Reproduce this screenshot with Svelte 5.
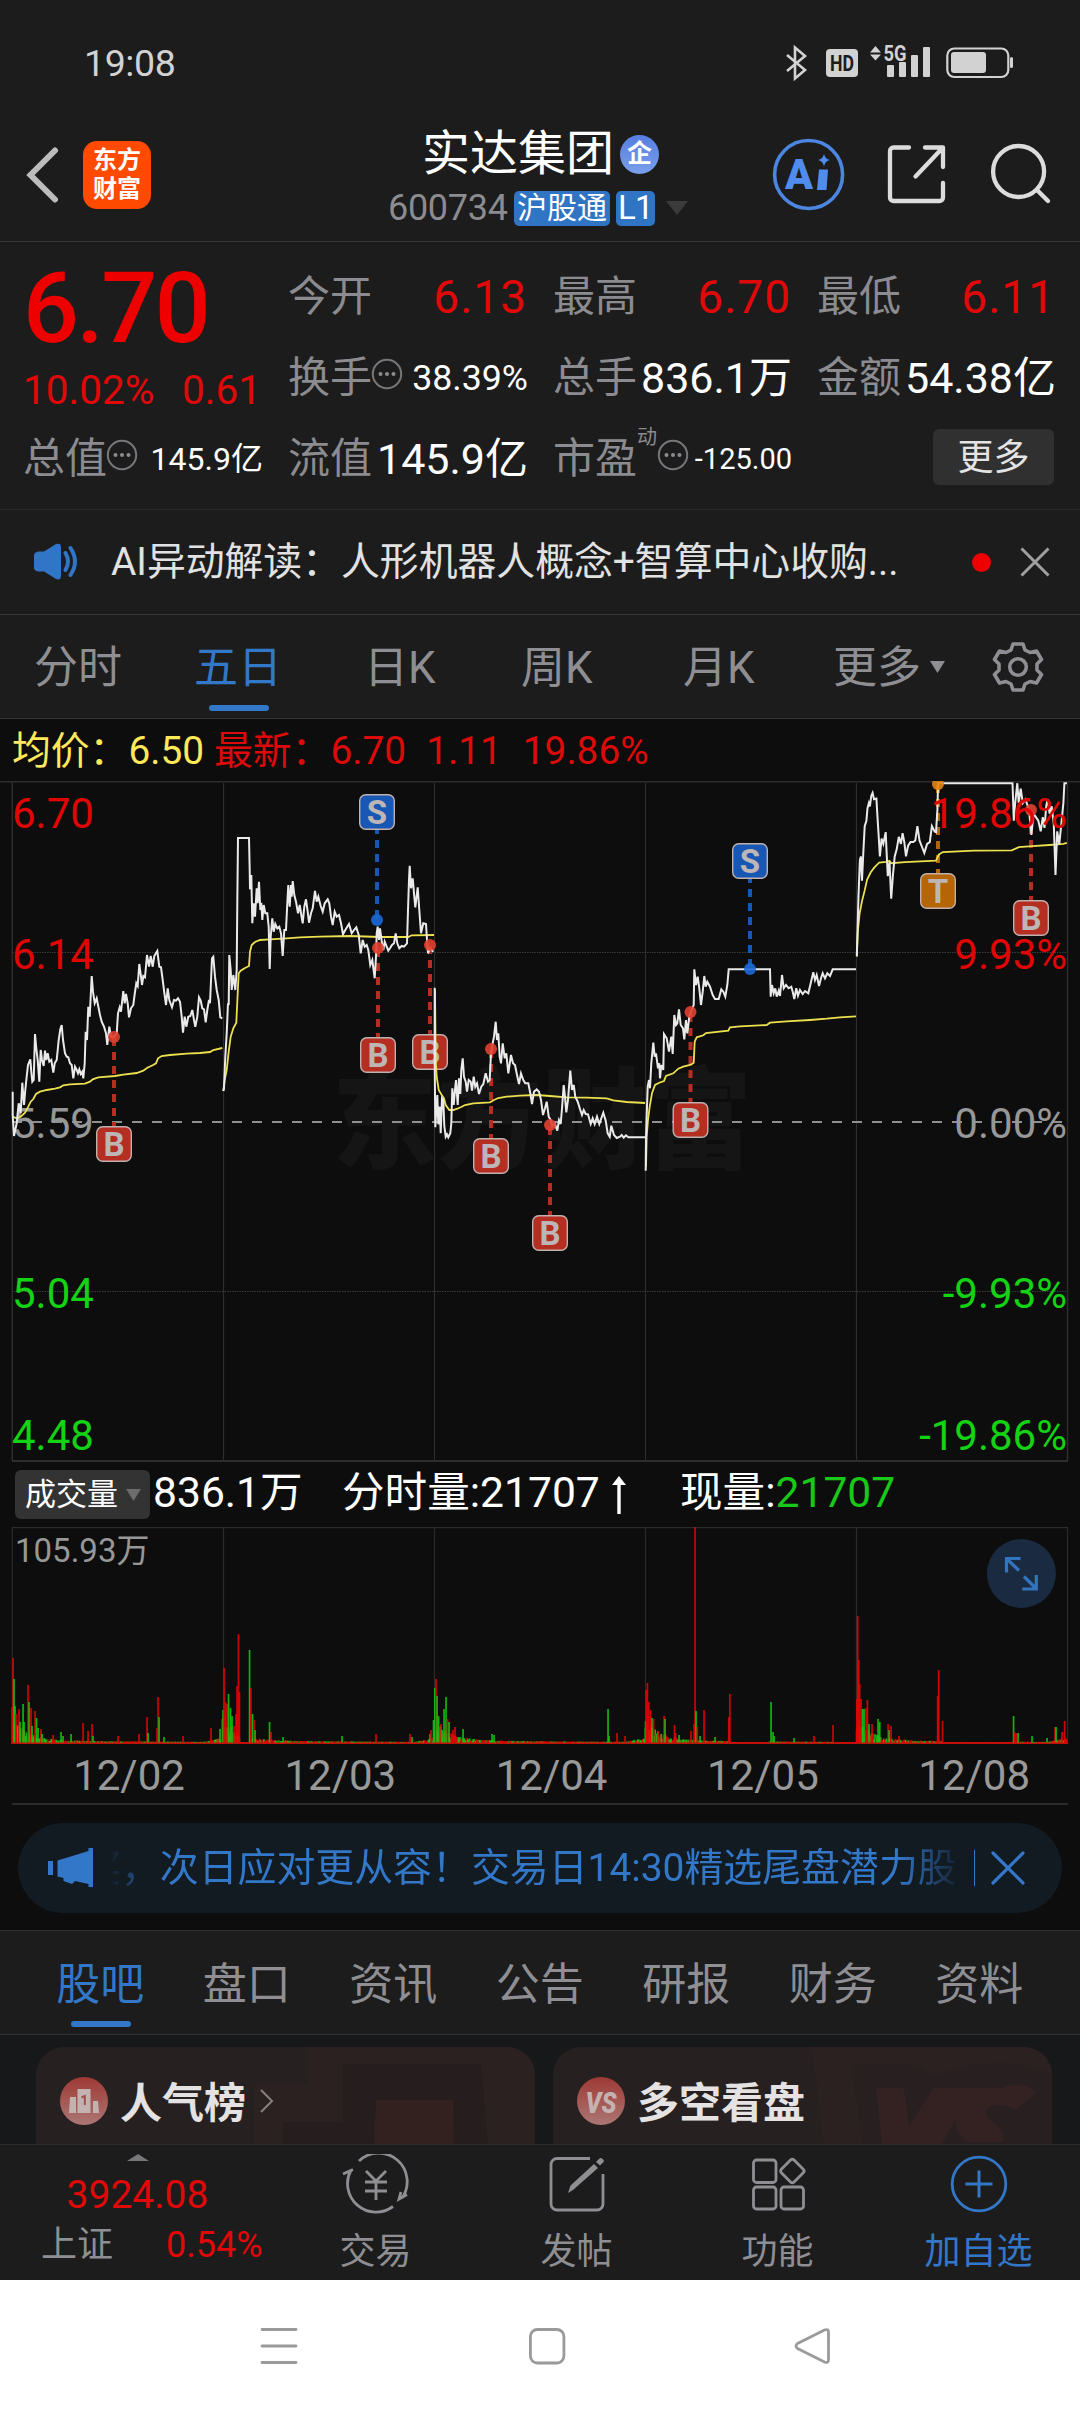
<script>
  // Intraday price sessions: each has an origin, a scale and a "x,y" series.
  const sessions = [
    { o: [0, 770], s: [3, 3],
      price: '38,965 38,1035 42,1098 50,1060 56,1000 62,1030 67,938 72,1005 76,960 80,920 84,885 91,868 94,905 97,935 101,930 105,792 109,835 113,870 118,935 122,840 126,870 131,888 135,842 139,870 143,850 148,875 154,870 160,908 164,880 170,870 176,810 181,778 185,765 189,810 195,850 200,860 205,862 210,880 215,885 220,925 225,890 230,900 234,910 238,898 242,912 247,905 250,925 254,880 257,785 261,810 265,710 269,740 275,618 279,665 284,700 290,685 294,705 300,735 305,755 312,770 318,790 322,825 328,770 333,800 342,800 350,790 354,730 359,712 363,725 370,663 374,700 378,672 383,700 387,742 393,715 400,705 404,672 409,640 413,648 418,582 423,620 426,645 430,618 435,622 441,555 447,590 452,558 458,590 463,558 472,543 478,590 483,592 488,630 493,668 498,705 503,655 508,690 516,712 522,690 528,692 534,685 540,695 545,740 549,788 554,740 559,770 565,740 571,738 577,720 581,745 586,770 592,740 597,682 602,692 607,715 612,718 617,757 622,720 627,690 630,700 636,565 640,560 645,620 650,660 656,690 661,742 667,745',
      avg: '38,1040 50,1045 62,1040 75,1028 85,1010 92,995 100,987 108,972 120,965 140,960 165,956 180,952 190,946 210,943 255,941 270,935 278,928 295,922 345,918 370,914 410,909 430,902 442,893 458,886 468,880 474,865 485,858 510,855 560,851 600,849 630,846 640,840 667,834' },
    { o: [0, 770], s: [3, 3],
      price: '670,963 672,955 676,860 680,790 684,700 686,705 688,555 692,600 695,660 700,615 706,660 710,600 712,400 714,204 747,204 749,300 750,358 754,315 757,460 761,400 765,440 770,355 773,400 777,335 781,420 784,398 787,450 791,405 796,430 802,430 806,470 809,597 812,500 817,445 821,485 826,462 832,475 838,470 843,490 848,558 853,480 858,480 862,400 865,345 869,410 873,345 875,380 878,333 883,375 888,395 894,430 899,405 904,435 908,460 913,410 918,388 923,425 927,458 933,430 938,415 945,363 950,395 955,380 962,408 968,425 974,400 983,388 988,400 993,440 998,465 1004,425 1010,440 1017,435 1023,460 1029,493 1036,480 1047,462 1055,490 1062,480 1069,472 1076,495 1082,550 1088,510 1094,530 1100,525 1105,540 1111,585 1117,570 1124,625 1128,560 1130,490 1133,470 1137,510 1140,475 1146,520 1150,540 1154,515 1160,530 1165,542 1170,535 1176,525 1182,520 1187,490 1192,520 1198,535 1205,528 1212,530 1221,520 1224,420 1227,330 1229,287 1233,355 1238,325 1243,380 1246,412 1253,352 1258,420 1263,490 1270,460 1278,462 1281,510 1284,550 1290,535 1300,545',
      avg: '670,963 674,930 680,900 686,845 692,800 700,775 709,758 714,650 716,610 722,602 735,594 747,588 750,545 755,525 765,516 780,510 810,508 860,505 900,502 960,500 1050,498 1140,501 1225,501 1235,496 1302,495' },
    { o: [320, 920], s: [3, 3],
      price: '344,203 344,430 346,622 349,570 352,525 355,613 359,560 362,640 366,535 370,540 373,618 377,650 381,643 385,652 391,640 394,610 397,505 401,555 405,510 408,480 413,555 417,475 421,522 424,450 428,415 432,470 437,485 441,515 446,480 452,485 456,512 461,470 466,500 471,490 477,522 484,500 490,492 497,460 504,485 509,480 513,400 518,370 522,350 527,305 531,360 535,340 539,410 543,430 548,370 554,415 559,400 565,460 573,405 579,430 585,435 591,465 597,492 603,460 610,480 616,490 625,490 631,520 636,552 642,515 650,508 657,515 663,540 669,585 675,565 680,545 686,590 692,600 697,620 704,610 712,632 717,600 722,612 726,565 731,495 735,530 739,577 744,540 751,452 756,510 761,495 766,530 773,545 781,570 786,585 791,570 797,582 804,583 812,612 818,595 824,612 831,590 838,612 850,578 857,602 863,640 869,650 874,617 882,645 890,654 900,650 905,645 911,653 918,646 925,652 975,652',
      avg: '345,210 347,420 350,470 356,510 365,525 372,535 377,555 388,570 400,570 412,566 425,560 435,555 460,550 510,547 522,540 535,534 560,530 600,527 650,525 690,528 740,532 800,533 860,535 880,541 920,546 975,549' },
    { o: [320, 920], s: [3, 3],
      price: '977,752 978,650 981,560 983,500 987,480 990,505 994,430 1000,368 1004,410 1008,400 1014,445 1018,430 1020,475 1024,435 1030,450 1032,342 1040,355 1047,395 1054,350 1058,402 1063,285 1068,315 1072,310 1077,268 1082,315 1089,325 1093,358 1098,300 1102,340 1108,290 1113,275 1121,255 1123,148 1128,195 1133,170 1138,205 1143,255 1148,215 1153,168 1157,200 1162,185 1170,200 1178,225 1185,237 1196,237 1204,208 1210,215 1216,230 1222,195 1226,148 1350,148 1352,230 1356,195 1361,220 1366,205 1370,230 1376,212 1380,228 1386,165 1391,205 1398,195 1406,205 1414,200 1418,215 1423,237 1429,205 1434,227 1440,210 1448,222 1455,213 1465,220 1472,190 1480,157 1485,180 1490,165 1497,198 1503,175 1508,160 1515,175 1522,160 1530,168 1538,148 1608,148',
      avg: '978,740 980,650 984,600 989,560 996,520 1005,495 1018,488 1032,483 1038,468 1060,460 1075,446 1090,440 1113,434 1121,428 1124,365 1130,352 1150,346 1158,339 1225,332 1230,322 1260,319 1340,315 1350,308 1400,304 1470,300 1520,296 1560,292 1608,289' },
    { o: [540, 610], s: [2.904, 2.8],
      price: '920,970 922,900 925,800 929,700 932,690 935,758 939,680 943,605 948,590 951,555 955,540 958,550 962,520 966,512 970,530 977,528 980,580 983,625 987,690 992,640 997,655 1004,622 1007,690 1010,745 1015,705 1020,808 1025,740 1030,690 1036,670 1042,635 1048,655 1053,625 1058,650 1063,690 1069,660 1076,650 1084,650 1090,645 1096,605 1102,645 1110,665 1116,680 1124,655 1132,650 1138,605 1146,620 1150,622 1154,560 1156,485 1372,485 1376,590 1380,540 1386,485 1390,540 1396,500 1402,540 1410,530 1420,560 1427,630 1433,570 1440,580 1447,590 1454,620 1460,580 1465,610 1470,550 1474,530 1480,570 1486,550 1492,600 1497,742 1502,620 1508,655 1514,600 1520,540 1523,485 1530,485',
      avg: '920,970 923,900 928,850 935,815 943,785 950,755 960,735 970,722 985,707 1005,705 1015,702 1020,709 1060,706 1150,702 1158,685 1170,678 1260,674 1370,673 1390,664 1430,661 1480,658 1520,655 1530,652' }
  ];
  const plot = (str, { o, s }) =>
    str.split(' ').map((p) => {
      const [x, y] = p.split(',').map(Number);
      return `${(o[0] + x / s[0]).toFixed(1)},${(o[1] + y / s[1]).toFixed(1)}`;
    }).join(' ');
  const lines = sessions.map((d) => ({ price: plot(d.price, d), avg: plot(d.avg, d) }));

  // Trade markers: letter, x, price point y, badge centre y
  const marks = [
    ['B', 114, 1037, 1144], ['S', 377, 920, 812], ['B', 378, 948, 1055], ['B', 430, 945, 1052],
    ['B', 491, 1049, 1156], ['B', 550, 1125, 1233], ['B', 690.5, 1012, 1120], ['S', 750, 969, 861],
    ['T', 938, 784, 891], ['B', 1031, 810, 918]
  ];
  const markFill = { B: '#b52e22', S: '#1858b4', T: '#b56505' };
  const dotFill = { B: '#e0402f', S: '#1c68d8', T: '#e08413' };

  const axis = [
    ['6.70', '19.86%', 827.5, 'r'], ['6.14', '9.93%', 969, 'r'], ['5.59', '0.00%', 1138, 'n'],
    ['5.04', '-9.93%', 1308, 'g'], ['4.48', '-19.86%', 1450, 'g']
  ];
  const vlines = [223.5, 434.5, 645.5, 856.5];
  const dates = ['12/02', '12/03', '12/04', '12/05', '12/08'];

  // Volume: spikes per session plus small decaying per-minute bars
  const R = '#e60505', G = '#14c814';
  const spikes = 'r12,37 r13,86 g14,65 g15,38 r16,30 r19,35 g20,22 g23,40 g24,22 r28,59 g29,42 r31,36 g32,18 r35,33 g36.5,26 g38,16 r41,15 g42,10 r53,9 g61,12 g63,8 g71,10 r83,21 r88,13 r92,20 g93,8 r118,8 r139,10 r147,27 g148,11 r157,16 r158,47 g159,27 g164,7 r183,8 r211,16 g220,15 r222,25 g223,34 r224,76 r225.5,42 r227,40 g228.5,50 g230.5,36 g232,28 r234,18 r236,30 r237,58 r238.4,110 r239.4,52 g249.5,94 r250.8,56 g252.5,30 r254,24 g255,14 g269.5,22 r271,12 g283,7 g342,8 r376,10 r410,10 g412,7 g430,10 r431,14 g433.5,24 g434.8,56 r436,65 g437,48 g438.5,28 r441,20 g442,14 g444,35 g446,47 r447.5,25 g449,22 r453,14 r455,17 g463,15 g492,10 g494,9 g608,35 g609,8 r617,11 r625,8 g645.4,16 r646.2,54 r647.4,61 r648.8,42 r650.5,34 g652,26 r653.5,25 r658,13 r664,28 g665,25 r674.5,19 r675.5,11 g679,9 r691,13 r694,20 r695,217 g696,33 r697.2,17 g700,8 r704,34 g715,7 r728.7,27 r729.8,50 g771,42 g773,12 g774,8 g794,6 r814,8 r833,19 r856.8,45 r857.6,128 r858.6,84 r859.6,60 r861,45 g862.5,35 g864,35 r866,36 r867.4,44 g869,20 r872,20 g878,25 g879.7,22 r888,20 g889,14 r891,18 r899,8 r937.6,48 r938.6,74 r942.5,23 g1013.5,28 r1014.5,12 r1016,11 g1018,11 g1032,8 g1047,6 r1055,17 g1056,17 r1062,12 r1064.6,23'
    .split(' ').map((t) => ({ c: t[0] === 'r' ? R : G, x: +t.slice(1).split(',')[0], h: +t.split(',')[1] }));
  let seed = 7;
  const rnd = () => ((seed = (seed * 16807) % 2147483647) / 2147483647);
  const noise = [];
  for (let d = 0; d < 5; d++) {
    for (let i = 0; i < 240; i++) {
      const x = 12.5 + d * 211 + i * 0.879;
      const limit = (x > 731 && x < 769) || (x > 943 && x < 1012) || (x > 834 && x < 856) || (x > 240 && x < 249);
      const env = limit ? 0 : 24 * Math.exp(-i / 14) + 4 * Math.exp(-i / 70) + (i > 218 ? (i - 218) * 0.22 : 0);
      noise.push({ x, h: 2 + env * (0.25 + 0.75 * rnd()), c: limit || rnd() > 0.48 ? R : G });
    }
  }
  const bars = [...noise, ...spikes];

  const tabs = [['分时', 'w1'], ['五日', 'w2 on'], ['日K', 'w3'], ['周K', 'w4'], ['月K', 'w5']];
  const sections = ['股吧', '盘口', '资讯', '公告', '研报', '财务', '资料'];
</script>

{#snippet dots()}
  <svg class="dots" viewBox="0 0 32 32"><circle cx="16" cy="16" r="14.2" fill="none" stroke="#77777b" stroke-width="2" /><g fill="#8c8c90"><circle cx="9.5" cy="16" r="2" /><circle cx="16" cy="16" r="2" /><circle cx="22.5" cy="16" r="2" /></g></svg>
{/snippet}

<div class="screen">
  <div class="status">
    <span class="clock">19:08</span>
    <svg width="232" height="44" viewBox="784 40 232 44">
      <g fill="none" stroke="#d2d2d2" stroke-width="2.6"><path d="M787 55l18 15-10 8.500V47.500l10 8.500-18 15" /><rect x="947.300" y="48.500" width="61" height="28.500" rx="7" stroke-width="2.200" /></g>
      <g fill="#d2d2d2"><rect x="826" y="49" width="32" height="28" rx="4" /><path d="M870 52.500l5.500-6.500 5.500 6.500zM870 54.500l5.500 6 5.500-6z" /><rect x="887" y="65" width="7" height="12" rx="1" /><rect x="899" y="62" width="7" height="15" rx="1" /><rect x="911" y="55" width="7" height="22" rx="1" /><rect x="923" y="47" width="7" height="30" rx="1" /><rect x="951" y="52" width="35" height="21" rx="3" /><rect x="1010" y="57" width="3" height="11" rx="1.500" /></g>
      <text x="842" y="70.800" class="hd" text-anchor="middle" textLength="24" lengthAdjust="spacingAndGlyphs">HD</text>
      <text x="883.500" y="61" class="g5" textLength="23" lengthAdjust="spacingAndGlyphs">5G</text>
    </svg>
  </div>

  <header>
    <svg class="back" width="36" height="60" viewBox="0 0 36 60"><path d="M30 5.500L5.500 30 30 54.500" fill="none" stroke="#bcbcbc" stroke-width="6" stroke-linecap="round" /></svg>
    <div class="logo"><span>东方</span><span>财富</span></div>
    <div class="title">
      <div class="name">实达集团<i class="corp">企</i></div>
      <div class="code"><span>600734</span><b>沪股通</b><b>L1</b><svg width="22" height="14"><path d="M0 0h22L11 14z" fill="#3b3b3b" /></svg></div>
    </div>
    <svg class="tools" width="292" height="76" viewBox="770 137 292 76">
      <circle cx="808.600" cy="174.500" r="34" fill="none" stroke="#4c86e0" stroke-width="3.600" />
      <text x="785" y="188.500" class="ai" textLength="28" lengthAdjust="spacingAndGlyphs">A</text>
      <path d="M819 169.500h9l-1.500 20.500h-9.500z" fill="#508cee" />
      <path d="M824 154q1 5 6 6-5 1-6 6.500-1-5.500-6-6.500 5-1 6-6z" fill="#508cee" />
      <g fill="none" stroke="#dcdcdc" stroke-width="4.300" stroke-linecap="round" stroke-linejoin="round"><path d="M909 147.500h-15.500a3.500 3.500 0 0 0-3.500 3.500v46.500a3.500 3.500 0 0 0 3.500 3.500h46a3.500 3.500 0 0 0 3.500-3.500V183M925 147.500h18V167M943 147.500L915.500 176.500" /><circle cx="1018.600" cy="171.500" r="25.500" /><path d="M1037.500 190.500l10.500 10.500" /></g>
    </svg>
  </header>

  <section class="quote">
    <div class="big">6.70</div>
    <div class="cell"><span>今开</span><em class="v46 red">6.13</em></div>
    <div class="cell"><span>最高</span><em class="v46 red">6.70</em></div>
    <div class="cell"><span>最低</span><em class="v46 red">6.11</em></div>
    <div class="delta"><span>10.02%</span><span>0.61</span></div>
    <div class="cell"><span>换手</span>{@render dots()}<em class="v36">38.39%</em></div>
    <div class="cell"><span>总手</span><em class="v43">836.1万</em></div>
    <div class="cell"><span>金额</span><em class="v43">54.38亿</em></div>
    <div class="cell"><span>总值</span>{@render dots()}<em class="v32">145.9亿</em></div>
    <div class="cell"><span>流值</span><em class="v43">145.9亿</em></div>
    <div class="cell pe"><span>市盈</span><sup>动</sup>{@render dots()}<em class="v30">-125.00</em></div>
    <div class="cell"><button class="more">更多</button></div>
  </section>

  <section class="notice">
    <svg width="46" height="38" viewBox="33 543 46 38"><path d="M38 551.500h6l12-7.500q5-1.500 5 3v29q0 4.500-5 3l-12-7.500h-6q-4-1-4-4v-12q0-3 4-4z" fill="#3075c6" /><path d="M65.500 553q5 8.500 0 17M70.500 548q9 13.500 0 27" fill="none" stroke="#3075c6" stroke-width="4" stroke-linecap="round" /></svg>
    <p>AI异动解读：人形机器人概念+智算中心收购...</p>
    <i></i>
    <svg width="30" height="30" viewBox="0 0 30 30"><path d="M1.500 1.500l27 27M28.500 1.500l-27 27" stroke="#a0a0a0" stroke-width="3" /></svg>
  </section>

  <nav class="tabs">
    {#each tabs as [t, c]}<span class={c}>{t}</span>{/each}
    <span class="w6">更多<svg width="15" height="12"><path d="M0 0h15L7.500 12z" fill="#8e8e93" /></svg></span>
    <svg class="gear" width="52" height="52" viewBox="-26 -26 52 52"><g fill="none" stroke="#8e8e93" stroke-width="3.600" stroke-linejoin="round"><path d="M-5 -23H5L7 -17L12 -14.500L18.500 -16L23.500 -7.500L19 -3V3L23.500 7.500L18.500 16L12 14.500L7 17L5 23H-5L-7 17L-12 14.500L-18.500 16L-23.500 7.500L-19 3V-3L-23.500 -7.500L-18.500 -16L-12 -14.500L-7 -17Z" /><circle r="8.300" /></g></svg>
  </nav>

  <div class="info"><span class="y">均价：<b>6.50</b></span><span>最新：<b>6.70</b></span><b>1.11</b><b>19.86%</b></div>

  <svg class="chart" width="1080" height="681" viewBox="0 781 1080 681">
    <text x="542" y="1160" text-anchor="middle" class="wm" textLength="420" lengthAdjust="spacingAndGlyphs">东方财富</text>
    <g stroke="#2d2d2f" stroke-width="1.200" fill="none">
      <path d="M0 781.700H1080" stroke-width="1.400" /><path d="M12 1461H1068" stroke-width="2" />
      <path d="M12.300 782V1461M1067.500 782V1461" stroke-width="1.500" />
      {#each vlines as x}<path d="M{x} 783V1461" />{/each}
      <path d="M12 952.500H1067M12 1291.500H1067" stroke="#3a3a3c" stroke-dasharray="1.500 1" stroke-width="1" />
    </g>
    <path d="M12 1122H1067" stroke="#8f8f8f" stroke-width="1.800" stroke-dasharray="10 10" />
    {#each axis as [l, r, y, c]}
      <text x="12" {y} class="ax {c}">{l}</text>
      {#if c !== 'r'}<text x="1067" {y} class="ax {c}" text-anchor="end">{r}</text>{/if}
    {/each}
    {#each marks as [k, x, py, by]}
      <path d="M{x} {by}V{py}" stroke={markFill[k]} stroke-width="4" stroke-dasharray="8 6" />
      <rect x={x - 17.300} y={by - 17.300} width="34.600" height="34.600" rx="6" fill={markFill[k]} stroke="#c0b0ae" stroke-width="1.400" />
      <text {x} y={by + 11.500} text-anchor="middle" class="mk">{k}</text>
    {/each}
    {#each lines as l}
      <polyline points={l.avg} fill="none" stroke="#ece04f" stroke-width="1.800" />
      <polyline points={l.price} fill="none" stroke="#eaeaea" stroke-width="2" />
    {/each}
    {#each marks as [k, x, py]}<circle cx={x} cy={py} r="6" fill={dotFill[k]} opacity=".9" />{/each}
    {#each axis as [, r, y, c]}
      {#if c === 'r'}<text x="1067" {y} class="ax r" text-anchor="end">{r}</text>{/if}
    {/each}
  </svg>

  <div class="volhead">
    <span class="pill">成交量<svg width="15" height="12"><path d="M0 0h15L7.500 12z" fill="#6c6c6c" /></svg></span>
    <span class="total">836.1万</span>
    <span class="minute">分时量:21707</span>
    <svg width="14" height="38" viewBox="0 0 14 38"><path d="M0 9L7 0l7 9z" fill="#fff" /><path d="M7 5V38" stroke="#fff" stroke-width="3.400" /></svg>
    <span class="now">现量:<em>21707</em></span>
  </div>

  <svg class="vol" width="1080" height="279" viewBox="0 1527 1080 279">
    <g stroke="#2b2b2d" fill="none" stroke-width="1.200"><path d="M12.300 1744V1527.600H1067.500V1744" />{#each vlines as x}<path d="M{x} 1528V1744" />{/each}<path d="M12 1804H1068" stroke-width="2" /></g>
    {#each bars as b}<rect x={b.x - 0.8} y={1744 - b.h} width="1.700" height={b.h} fill={b.c} opacity=".88" />{/each}
    <path d="M12 1743.300H1068" stroke="#c01008" stroke-width="1.400" />
    <text x="15" y="1562" class="vmax">105.93万</text>
    {#each dates as d, i}<text x={129 + i * 211.300} y="1790" text-anchor="middle" class="date">{d}</text>{/each}
    <circle cx="1021.400" cy="1573.500" r="34.500" fill="#1a2b41" />
    <path d="M1006.500 1572.500v-14h14M1007 1559l12 11.500M1036.300 1575v14h-14M1036 1588.500l-12-12" fill="none" stroke="#3374be" stroke-width="3.200" />
  </svg>

  <div class="bannerwrap"><div class="banner">
    <svg width="46" height="40" viewBox="48 1848 46 40"><path d="M48 1861h5v14h-5zM57.500 1860.500l31-9.500v-3h4.500v39h-4.500v-3l-13.500-3-3 3-8.500-3v-3l-6-1.500z" fill="#3277c8" /></svg>
    <div class="marquee"><p>奖，次日应对更从容！交易日14:30精选尾盘潜力股</p></div>
    <hr />
    <svg width="34" height="34" viewBox="0 0 34 34"><path d="M2 2l30 30M32 2L2 32" stroke="#3277c8" stroke-width="3.200" stroke-linecap="round" /></svg>
  </div></div>

  <nav class="sections">{#each sections as s, i}<span class:on={i === 0}>{s}</span>{/each}</nav>

  <section class="cards">
    <div class="card">
      <svg class="art" width="280" height="97" viewBox="0 0 280 97"><path d="M0 97V38h53V0h226v97z" fill="#2b2120" /><path d="M28 97V75h60V17h138l7 80z" fill="#261d1e" /><path d="M119 97l2-44h77l1 44z" fill="#332120" /></svg>
      <svg class="ic" width="50" height="50" viewBox="-25 -25 50 50"><defs><linearGradient id="rg" x2="0" y2="1"><stop stop-color="#9e3934" /><stop offset="1" stop-color="#ab7774" /></linearGradient></defs><circle r="24" fill="url(#rg)" /><path d="M-15 12l1-16h6v16zM-6.500 12v-24h13v24zM9 12V0h5l1 12z" fill="#c4b2b1" /><path d="M-2.500-3.500L.800-5V4" fill="none" stroke="#a0504c" stroke-width="2" /></svg>
      <strong>人气榜</strong>
      <svg width="15" height="24" viewBox="0 0 15 24"><path d="M2 1l11 11L2 23" fill="none" stroke="#858080" stroke-width="2" /></svg>
    </div>
    <div class="card">
      <svg class="art" width="240" height="97" viewBox="0 0 240 97"><path d="M0 0h240v97H12z" fill="#2b2120" /><path d="M40 18h65l18 11q60-25 117-2v70H50z" fill="#281f20" /><path d="M64 41h28l5 38 24-38h68q24-9 35 5l-20 17q-18-9-27-2t6 15q9 8 8 19h-33q-14-5-15-22l-14 26H70z" fill="#332221" /></svg>
      <svg class="ic" width="50" height="50" viewBox="-25 -25 50 50"><circle r="24" fill="url(#rg)" /><text y="11.500" text-anchor="middle" class="vs" textLength="31" lengthAdjust="spacingAndGlyphs">VS</text></svg>
      <strong>多空看盘</strong>
    </div>
  </section>

  <footer>
    <div class="index">
      <svg width="22" height="7"><path d="M0 7L11 0l11 7z" fill="#77777a" /></svg>
      <b>3924.08</b>
      <div><span>上证</span><em>0.54%</em></div>
    </div>
    <div class="act"><svg width="68" height="60" viewBox="-34 -30 68 60"><g fill="none" stroke="#8e8e93" stroke-width="2.800"><path d="M-17 -23A28.500 28.500 0 0 1 26 14M17 22.500A28.500 28.500 0 0 1 -25 -14M-33 -10l10-4.500M31 10.500l-8 4.500 2-7" /><path d="M-10 -13L0 -3l10-10M0 -3v19M-11 -2h22M-11 7h22" /></g></svg><span>交易</span></div>
    <div class="act"><svg width="68" height="60" viewBox="-34 -30 68 60"><path d="M13 -25.500H-20a6 6 0 0 0-6 6V20a6 6 0 0 0 6 6H20a6 6 0 0 0 6-6V-10" fill="none" stroke="#8e8e93" stroke-width="2.800" /><path d="M-9 9l2.500-7.500L17-20l4 4L-4 6zM19-22l4-4q3.500 0 4 3.500l-4 4z" fill="#8e8e93" /></svg><span>发帖</span></div>
    <div class="act"><svg width="68" height="60" viewBox="-34 -30 68 60"><g fill="none" stroke="#8e8e93" stroke-width="2.800"><rect x="-24.500" y="-24" width="22.500" height="22.500" rx="3" /><rect x="-24.500" y="3" width="22.500" height="22" rx="3" /><rect x="3" y="3" width="22.500" height="22" rx="3" /><rect x="5.300" y="-22" width="18" height="18" rx="2.500" transform="rotate(45 14.300 -13)" /></g></svg><span>功能</span></div>
    <div class="act blue"><svg width="68" height="60" viewBox="-34 -30 68 60"><g fill="none" stroke="#3277c8" stroke-width="2.800"><circle r="26.800" /><path d="M-13.500 0h27M0-13.500v27" stroke-width="3" /></g></svg><span>加自选</span></div>
  </footer>

  <div class="sysnav">
    <svg width="1080" height="132" viewBox="0 2280 1080 132"><g fill="none" stroke="#9a9a9a" stroke-width="2.800" stroke-linejoin="round" stroke-linecap="round"><path d="M262 2329.500h34M262 2346h34M262 2362.500h34" /><rect x="530.400" y="2329.500" width="33.500" height="33.500" rx="7" /><path d="M797.500 2343.500q-3 2.500 0 5l27 13.500q4 1.500 4-2v-28q0-3.500-4-2z" /></g></svg>
  </div>
</div>

<style>
  :global(body) { margin: 0; background: #0d0d0d; }
  .screen { width: 1080px; height: 2412px; overflow: hidden; display: flex; flex-direction: column; background: #0d0d0d; font-family: Roboto, "Noto Sans CJK SC", sans-serif; color: #fff; }
  .screen > * { flex: none; box-sizing: border-box; }
  em, i, b { font-style: normal; font-weight: 400; }
  p { margin: 0; }
  svg { display: block; flex: none; }
  span, strong, p, em, b { white-space: nowrap; }

  .status { height: 125px; background: #1c1c1c; display: flex; justify-content: space-between; padding: 41px 64px 0 84px; }
  .status svg { margin-top: -1px; }
  .clock { font-size: 37.5px; line-height: 44px; color: #d2d2d2; letter-spacing: -0.4px; }
  .hd { font: 700 22px Roboto; fill: #1c1c1c; }
  .g5 { font: 700 22px Roboto; fill: #d2d2d2; }

  header { height: 117px; background: #1c1c1c; border-bottom: 1px solid #343436; display: flex; align-items: flex-start; padding-left: 25px; }
  .back { margin-top: 20px; }
  .logo { margin: 16px 0 0 22px; width: 68px; height: 68px; border-radius: 14px; background: #ff4a00; font-size: 24px; font-weight: 700; display: flex; flex-direction: column; align-items: center; justify-content: center; line-height: 29px; }
  .title { margin-left: 237px; width: 302px; display: flex; flex-direction: column; }
  .name { font-size: 48px; line-height: 58px; display: flex; align-items: center; padding-left: 34px; }
  .corp { margin-left: 6px; width: 39px; height: 39px; border-radius: 50%; background: linear-gradient(#557ee0, #7a9fec); font-size: 25px; font-weight: 700; line-height: 38px; text-align: center; }
  .code { display: flex; align-items: center; height: 36px; margin-top: 7px; }
  .code span { color: #8b8b90; font-size: 36px; letter-spacing: -0.3px; width: 126px; }
  .code b { background: #3075c4; border-radius: 5px; height: 35px; line-height: 34px; font-size: 30px; padding: 0 3px; margin-right: 6px; }
  .code b + b { font-size: 33px; padding: 0 2px; letter-spacing: -0.8px; }
  .code svg { margin-left: 5px; }
  .tools { margin: 12px 0 0 80px; }
  .ai { font: 900 43px Roboto; fill: #508cee; }

  .quote { height: 268px; background: #1c1c1c; border-bottom: 1px solid #29292b; display: grid; grid-template-columns: 238px 238px 237px 237px; grid-template-rows: repeat(3, 81px); column-gap: 27px; padding: 14px 0 0 23px; }
  .cell, .delta { display: flex; align-items: center; color: #8b8b90; font-size: 42px; line-height: 60px; }
  .cell > em { margin-left: auto; margin-right: -2px; color: #fff; }
  .cell > em.red { color: #e00808; margin-right: -1px; }
  .dots { width: 32px; height: 32px; margin: -8px 0 0 -1px; }
  .v46 { font-size: 46px; letter-spacing: 1px; }
  .v43 { font-size: 43px; }
  .v36 { font-size: 35.7px; }
  .v32 { font-size: 32px; }
  .v30 { font-size: 29px; }
  .big { font-size: 98.5px; font-weight: 500; line-height: 106px; color: #ee0000; letter-spacing: -2.5px; }
  .delta { color: #e00808; font-size: 40.5px; padding-top: 23px; justify-content: space-between; height: 60px; }
  sup { font-size: 20px; line-height: 22px; align-self: flex-start; margin: 8px 1px 0 0; }
  .more { margin: 0 0 4px 116px; width: 125px; height: 56px; border: 0; border-radius: 6px; background: #303031; color: #e4e4e4; font: 36px "Noto Sans CJK SC"; line-height: 46px; padding: 0 0 6px; }

  .notice { height: 105px; background: #1c1c1c; border-bottom: 1px solid #343436; display: flex; align-items: center; padding-left: 33px; }
  .notice p { margin-left: 32px; width: 861px; font-size: 38.85px; line-height: 56px; color: #e2e2e2; }
  .notice i { width: 19px; height: 19px; border-radius: 50%; background: #ee0000; margin-right: 29px; }

  .tabs { height: 104px; background: #1c1c1c; border-bottom: 1px solid #343436; display: flex; align-items: center; padding-left: 34px; color: #8e8e93; font-size: 44px; line-height: 100px; }
  .tabs span { display: flex; align-items: center; padding-top: 3px; height: 100px; box-sizing: border-box; }
  .w1 { width: 160px; }
  .w2 { width: 170px; }
  .w3 { width: 157px; }
  .w4 { width: 162px; }
  .w5 { width: 150px; }
  .w6 { width: 159px; }
  .w6 svg { margin: -3px 0 0 9px; }
  .tabs .on { color: #3277c8; position: relative; }
  .tabs .on::after { content: ""; position: absolute; left: 15px; bottom: 6px; width: 60px; height: 6px; border-radius: 3px; background: #3277c8; }

  .info { height: 62px; display: flex; padding: 1px 0 0 12px; font-size: 38.8px; line-height: 62px; color: #dc0a0a; }
  .info .y { color: #ffe95a; margin-right: 10px; }
  .info span + b { margin: 0 21px 0 20px; }
  .wm { font: 900 110px "Noto Sans CJK SC"; fill: #151516; }
  .ax { font: 42px Roboto; }
  .r { fill: #e00606; }
  .n { fill: #979797; }
  .g { fill: #14d214; }
  .mk { font: 700 33px Roboto; fill: #beb6b6; }

  .volhead { height: 65px; display: flex; align-items: center; padding-left: 15px; font-size: 42.6px; }
  .pill { background: #333334; border-radius: 6px; width: 125px; height: 49px; font-size: 31px; line-height: 46px; padding-left: 10px; display: flex; align-items: center; }
  .pill svg { margin-left: 8px; }
  .total { width: 189px; margin-left: 3px; }
  .minute { width: 270px; }
  .total, .minute, .now { line-height: 60px; margin-top: -5px; }
  .now { margin-left: 54px; }
  .now em { color: #19c819; }
  .vmax { font: 33px Roboto, "Noto Sans CJK SC"; fill: #979797; }
  .date { font: 42px Roboto; fill: #999; }

  .bannerwrap { height: 124px; padding: 17px 18px 0; }
  .banner { height: 90px; border-radius: 45px; background: #121a22; display: flex; align-items: center; padding-left: 30px; }
  .marquee { margin-left: 15px; width: 850px; overflow: hidden; color: #3277c8; font-size: 38.9px; line-height: 60px; -webkit-mask-image: linear-gradient(90deg, transparent, #000 50px, #000 790px, transparent 855px); }
  .marquee p { margin-left: -27px; }
  hr { width: 1px; height: 36px; border: 0; background: #3277c8; margin: 0 16px 0 15px; }

  .sections { height: 105px; background: #1c1c1c; border: solid #303032; border-width: 1px 0; display: flex; padding-left: 27px; font-size: 44px; line-height: 109px; color: #8e8e93; }
  .sections span { width: 146.500px; text-align: center; height: 103px; }
  .sections .on { color: #3277c8; position: relative; }
  .sections .on::after { content: ""; position: absolute; left: 44px; bottom: 7px; width: 60px; height: 6px; border-radius: 3px; background: #3277c8; }

  .cards { height: 109px; background: #17181a; display: flex; gap: 18px; padding: 12px 28px 0 36px; }
  .card { width: 499px; height: 97px; border-radius: 28px 28px 0 0; overflow: hidden; background: #272020; display: flex; align-items: center; padding: 11px 0 0 23px; box-sizing: border-box; position: relative; }
  .card > * { position: relative; }
  .card .art { position: absolute; right: 0; top: 0; }
  .card strong { font-size: 42px; line-height: 60px; margin: 0 13px 0 11px; padding-top: 5px; color: #e4e2e2; }
  .vs { font: italic 900 29px Roboto; fill: #c4b2b1; }

  footer { height: 136px; background: #1c1c1c; border-top: 1px solid #2b2b2d; display: flex; }
  .index { width: 275px; color: #e00808; display: flex; flex-direction: column; align-items: center; padding-top: 9px; }
  .index b { font-size: 39px; line-height: 46px; margin-top: 11px; }
  .index div { display: flex; align-self: stretch; font-size: 36px; line-height: 54px; padding-left: 41px; }
  .index span { color: #8e8e93; width: 125px; }
  .act { width: 201px; display: flex; flex-direction: column; align-items: center; padding-top: 9px; font-size: 36px; color: #8e8e93; line-height: 52px; }
  .act span { margin-top: 12px; }
  .blue { color: #3277c8; }
  .sysnav { height: 132px; background: #fff; }
</style>
